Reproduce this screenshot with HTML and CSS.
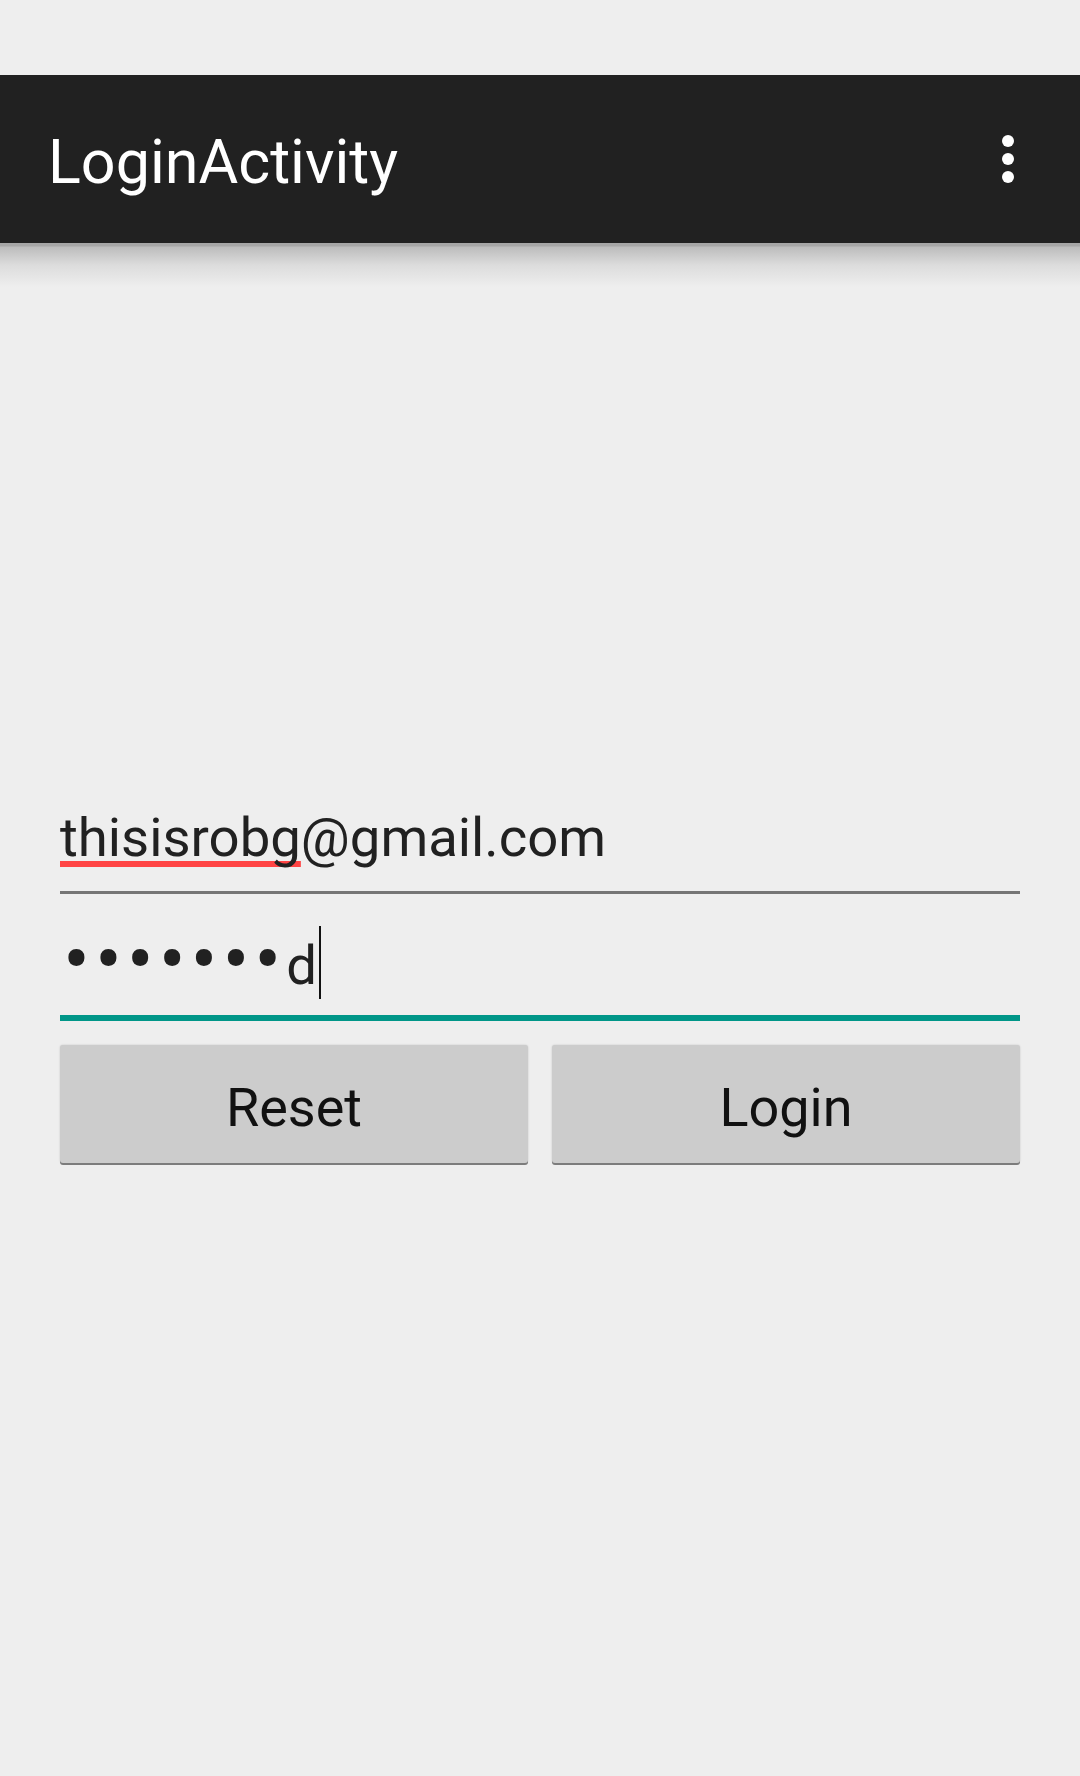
FILE: index.html
```html
<!DOCTYPE html>
<html lang="en">
<head>
<meta charset="utf-8">
<title>LoginActivity</title>
<link rel="stylesheet" href="styles.css">
</head>
<body>
<div class="screen">
  <div class="statusbar"></div>
  <header class="appbar">
    <h1 class="title">LoginActivity</h1>
    <svg class="overflow" width="12" height="48" viewBox="0 0 12 48" aria-label="More options">
      <circle cx="6" cy="6" r="6" fill="#ffffff"/>
      <circle cx="6" cy="24" r="6" fill="#ffffff"/>
      <circle cx="6" cy="42" r="6" fill="#ffffff"/>
    </svg>
  </header>
  <div class="appbar-shadow"></div>
  <main class="content">
    <form class="form">
      <div class="field field-email"><span class="misspelled">thisisrobg</span>@gmail.com</div>
      <div class="field field-password"><span class="dots">•••••••</span>d<span class="cursor"></span></div>
      <div class="buttons">
        <button type="button" class="btn">Reset</button>
        <button type="button" class="btn">Login</button>
      </div>
    </form>
  </main>
</div>
</body>
</html>
```

FILE: styles.css
```css
html, body {
  margin: 0;
  padding: 0;
  background: #eeeeee;
}

.screen {
  width: 1080px;
  height: 1776px;
  display: flex;
  flex-direction: column;
  background: #eeeeee;
  font-family: Roboto, "Noto Sans", sans-serif;
  overflow: hidden;
}

.statusbar {
  height: 75px;
  flex: none;
  background: #eeeeee;
}

.appbar {
  height: 168px;
  flex: none;
  background: #212121;
  display: flex;
  align-items: center;
  justify-content: space-between;
}

.title {
  margin: 6px 0 0 48px;
  font-size: 61px;
  font-weight: 400;
  line-height: 62px;
  color: #ffffff;
}

.overflow {
  display: block;
  margin-right: 66px;
}

.appbar-shadow {
  height: 48px;
  flex: none;
  background: linear-gradient(#a6a6a6 0, #a6a6a6 3px, #bcbcbc 4px, #dcdcdc 22px, #eeeeee 44px);
}

.content {
  flex: 1;
  padding: 512px 60px 0;
}

.form {
  display: flex;
  flex-direction: column;
}

.field {
  font-size: 54.5px;
  line-height: 68px;
  height: 68px;
  color: #212121;
  white-space: nowrap;
}

.field-email {
  padding-bottom: 20px;
  border-bottom: 3px solid #757575;
}

.misspelled {
  text-decoration: underline;
  text-decoration-color: #ff4444;
  text-decoration-thickness: 6px;
  text-underline-offset: 5px;
  text-decoration-skip-ink: none;
}

.field-password {
  padding-top: 32px;
  padding-bottom: 21px;
  border-bottom: 6px solid #009688;
}

.dots {
  font-size: 80px;
  letter-spacing: 4.9px;
  padding-left: 3px;
  vertical-align: -3px;
}

.cursor {
  display: inline-block;
  width: 2px;
  height: 73px;
  margin-left: 2px;
  background: #111111;
  vertical-align: -15px;
}

.buttons {
  display: grid;
  grid-template-columns: 1fr 1fr;
  gap: 24px;
  margin-top: 24px;
}

.btn {
  height: 118px;
  margin: 0;
  border: none;
  border-radius: 3px;
  background: #cccccc;
  box-shadow: 0 2px 0 #7c7c7c, 0 0 2px rgba(0, 0, 0, 0.18);
  font-family: Roboto, "Noto Sans", sans-serif;
  font-size: 54px;
  color: #111111;
  padding: 6px 0 0;
}
```
